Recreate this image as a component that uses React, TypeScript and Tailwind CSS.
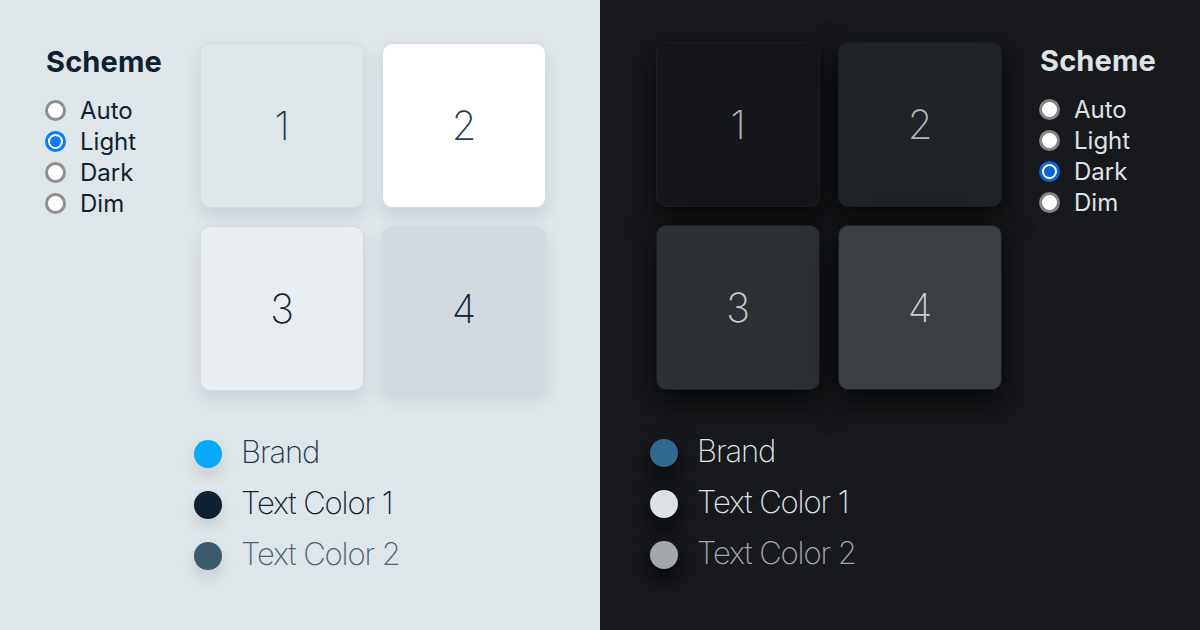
import React from 'react';

type Theme = 'light' | 'dark';

const options = ['Auto', 'Light', 'Dark', 'Dim'];

function Radio({ theme, checked }: { theme: Theme; checked: boolean }) {
  if (checked) {
    return (
      <span
        className={
          theme === 'light'
            ? 'flex h-[21px] w-[21px] shrink-0 items-center justify-center rounded-full border-[3px] border-[#0a7aff] bg-white'
            : 'flex h-[21px] w-[21px] shrink-0 items-center justify-center rounded-full border-[3px] border-[#0b63d6] bg-white'
        }
      >
        <span
          className={
            theme === 'light'
              ? 'h-[11px] w-[11px] rounded-full bg-[#0a7aff]'
              : 'h-[11px] w-[11px] rounded-full bg-[#0b63d6]'
          }
        />
      </span>
    );
  }
  return (
    <span
      className={
        theme === 'light'
          ? 'h-[21px] w-[21px] shrink-0 rounded-full border-[3px] border-[#8e8e93] bg-white'
          : 'h-[21px] w-[21px] shrink-0 rounded-full border-[3px] border-[#838388] bg-white'
      }
    />
  );
}

function SchemePicker({ theme, selected }: { theme: Theme; selected: string }) {
  const text = theme === 'light' ? 'text-[#0c2231]' : 'text-[#dfe3e6]';
  return (
    <div className={`pt-[2px] ${text}`}>
      <h2 className="text-[29px] leading-[34px] font-bold tracking-[0.005em]">Scheme</h2>
      <ul className="mt-[16px] -ml-[1px]">
        {options.map((opt) => (
          <li key={opt} className="flex h-[31px] items-center gap-[14px]">
            <Radio theme={theme} checked={opt === selected} />
            <span className="text-[24px] leading-[31px]">{opt}</span>
          </li>
        ))}
      </ul>
    </div>
  );
}

interface Swatch {
  label: string;
  dot: string;
  text: string;
}

function Cards({ theme }: { theme: Theme }) {
  const cards =
    theme === 'light'
      ? [
          'bg-[#dfe6ea] text-[#253f50]',
          'bg-white text-[#253f50]',
          'bg-[#e7edf0] text-[#0f2535]',
          'bg-[#d2dae0] text-[#0f2535]',
        ]
      : [
          'bg-[#15171a] text-[#b3b8bb]',
          'bg-[#212427] text-[#b3b8bb]',
          'bg-[#2e3134] text-[#c9cdd0]',
          'bg-[#3c3f42] text-[#c9cdd0]',
        ];
  const shadow =
    theme === 'light'
      ? 'border border-[#d3dbe0] shadow-[0_8px_16px_rgba(40,60,80,0.12)]'
      : 'border border-[#1d2023] shadow-[0_12px_32px_rgba(0,0,0,0.8)]';
  return (
    <div className="grid grid-cols-[164px_164px] gap-[18px]">
      {cards.map((c, i) => (
        <div
          key={i}
          className={`flex h-[165px] items-center justify-center rounded-[10px] ${shadow} ${c}`}
        >
          <span className="text-[40px] leading-none font-extralight">{i + 1}</span>
        </div>
      ))}
    </div>
  );
}

function Legend({ theme }: { theme: Theme }) {
  const items: Swatch[] =
    theme === 'light'
      ? [
          { label: 'Brand', dot: 'bg-[#0aa9f8]', text: 'text-[#1d3a4c]' },
          { label: 'Text Color 1', dot: 'bg-[#0c2231]', text: 'text-[#0c2231]' },
          { label: 'Text Color 2', dot: 'bg-[#3d5a6c]', text: 'text-[#4a6476]' },
        ]
      : [
          { label: 'Brand', dot: 'bg-[#2f6a8e]', text: 'text-[#dfe3e6]' },
          { label: 'Text Color 1', dot: 'bg-[#dce2e5]', text: 'text-[#dfe3e6]' },
          { label: 'Text Color 2', dot: 'bg-[#a5a8ab]', text: 'text-[#a5a8ab]' },
        ];
  const dotShadow =
    theme === 'light'
      ? 'shadow-[0_8px_14px_rgba(40,60,80,0.14)]'
      : 'shadow-[0_10px_22px_rgba(0,0,0,0.85)]';
  return (
    <ul className="mt-[37px] -ml-[6px]">
      {items.map((it) => (
        <li key={it.label} className="flex h-[51px] items-center gap-[19px]">
          <span className={`h-[28px] w-[28px] shrink-0 rounded-full ${it.dot} ${dotShadow}`} />
          <span
            className={`pb-[4px] text-[31px] leading-none font-extralight tracking-[-0.035em] ${it.text}`}
          >
            {it.label}
          </span>
        </li>
      ))}
    </ul>
  );
}

export default function App() {
  return (
    <div
      className="flex h-[630px] w-[1200px] overflow-hidden"
      style={{ fontFamily: 'Inter, "Noto Sans", sans-serif' }}
    >
      <section className="flex h-full w-[600px] bg-[#dfe6ea] pt-[43px] pl-[46px]">
        <div className="w-[154px]">
          <SchemePicker theme="light" selected="Light" />
        </div>
        <div>
          <Cards theme="light" />
          <Legend theme="light" />
        </div>
      </section>
      <section className="flex h-full w-[600px] bg-[#17191c] pt-[42px] pl-[56px]">
        <div>
          <Cards theme="dark" />
          <Legend theme="dark" />
        </div>
        <div className="ml-[38px]">
          <SchemePicker theme="dark" selected="Dark" />
        </div>
      </section>
    </div>
  );
}
